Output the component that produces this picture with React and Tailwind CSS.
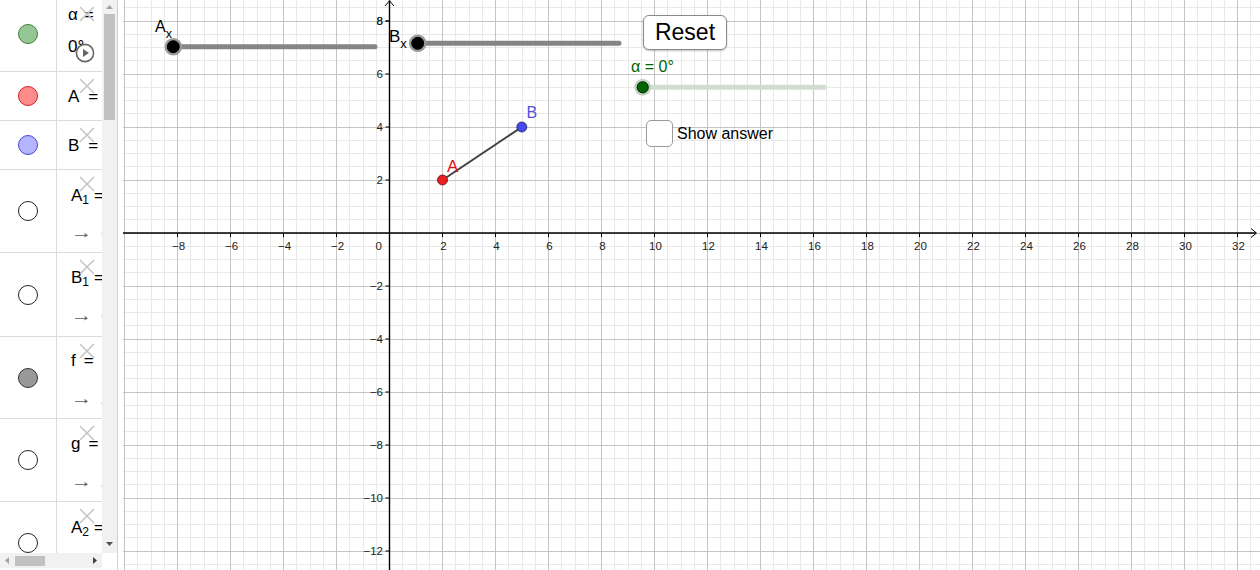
import React from 'react';

// graphics view geometry (page pixels)
const X0 = 389.5;
const Y0 = 233;
const U = 26.5;
const M = U / 2;

const range = (a, b) => {
  const out = [];
  for (let i = a; i <= b; i++) out.push(i);
  return out;
};

const Marble = ({ className }) => (
  <span className={`block w-[20px] h-[20px] rounded-full border ${className}`} />
);

const CloseX = () => (
  <svg className="absolute left-[22px] top-[6px]" width="16" height="16" viewBox="0 0 16 16">
    <path d="M1 1 L15 15 M15 1 L1 15" stroke="#c6c6c6" strokeWidth="1.6" fill="none" />
  </svg>
);

const Row = ({ height, marble, marbleBox = '', text, children, extra }) => (
  <div className={`flex flex-none border-b border-[#dcdcdc] ${height}`}>
    <div className={`w-[57px] flex-none border-r border-[#dcdcdc] flex items-center justify-center ${marbleBox}`}>
      <Marble className={marble} />
    </div>
    <div className={`relative flex-1 flex flex-col whitespace-nowrap leading-[20px] ${text}`}>
      {children}
      <CloseX />
      {extra}
    </div>
  </div>
);

const Arrow = ({ value }) => (
  <span>
    <span className="inline-block text-[#5a5a5a] scale-x-125 origin-left">→</span>
    <span className="ml-[13px]">{value}</span>
  </span>
);

const Name = ({ children, sub, gap = 'ml-[9px]' }) => (
  <span className="flex items-baseline">
    <span>
      {children}
      {sub && <sub className="text-[12px]">{sub}</sub>}
    </span>
    <span className={gap}>=</span>
  </span>
);

const AlgebraView = () => (
  <div className="w-[123px] h-full flex flex-none">
    <div className="w-[117px] flex flex-col">
      <div className="flex flex-1 min-h-0">
        <div className="w-[102px] overflow-hidden flex flex-col text-[17px] text-black">
          <Row height="h-[72px]" marble="bg-[#94c794] border-[#3f7f3f]" marbleBox="pb-[4px]" text="pl-[11px] pt-[5px] gap-[12px]"
            extra={
              <svg className="absolute left-[18px] top-[43px]" width="20" height="20" viewBox="0 0 20 20">
                <circle cx="10" cy="10" r="8.6" stroke="#666" strokeWidth="1.6" fill="white" fillOpacity="0.6" />
                <path d="M8 6 L14 10 L8 14 Z" fill="#666" />
              </svg>
            }>
            <Name gap="ml-[6px]">α</Name>
            <span>0°</span>
          </Row>
          <Row height="h-[49px]" marble="bg-[#ff8c8c] border-[#cc2222]" text="pl-[11px] pt-[15px]">
            <Name>A</Name>
          </Row>
          <Row height="h-[49px]" marble="bg-[#b5b5ff] border-[#4646d8]" text="pl-[11px] pt-[15px]">
            <Name>B</Name>
          </Row>
          <Row height="h-[83px]" marble="bg-white border-[#222]" text="pl-[14px] pt-[16px] gap-[17px]">
            <Name sub="1" gap="ml-[5px]">A</Name>
            <Arrow value="(2, 2)" />
          </Row>
          <Row height="h-[84px]" marble="bg-white border-[#222]" text="pl-[14px] pt-[15px] gap-[18px]">
            <Name sub="1" gap="ml-[5px]">B</Name>
            <Arrow value="(5, 4)" />
          </Row>
          <Row height="h-[82px]" marble="bg-[#999] border-[#333]" text="pl-[14px] pt-[14px] gap-[18px]">
            <Name gap="ml-[8px]">f</Name>
            <Arrow value="2" />
          </Row>
          <Row height="h-[83px]" marble="bg-white border-[#222]" text="pl-[14px] pt-[15px] gap-[18px]">
            <Name gap="ml-[8px]">g</Name>
            <Arrow value="2" />
          </Row>
          <Row height="h-[83px]" marble="bg-white border-[#222]" text="pl-[14px] pt-[16px]">
            <Name sub="2" gap="ml-[5px]">A</Name>
          </Row>
        </div>
        {/* vertical scrollbar */}
        <div className="w-[15px] flex-none bg-[#f1f1f1] flex flex-col items-center pt-[5px] pb-[7px]">
          <svg width="7" height="4" viewBox="0 0 7 4"><path d="M0 4 L3.5 0 L7 4 Z" fill="#a3a3a3" /></svg>
          <div className="mt-[5px] w-[11px] h-[106px] bg-[#c1c1c1]" />
          <div className="flex-1" />
          <svg width="7" height="4" viewBox="0 0 7 4"><path d="M0 0 L3.5 4 L7 0 Z" fill="#505050" /></svg>
        </div>
      </div>
      {/* horizontal scrollbar */}
      <div className="h-[15px] flex flex-none">
        <div className="w-[102px] bg-[#f1f1f1] flex items-center pl-[5px] pr-[5px]">
          <svg width="4" height="7" viewBox="0 0 4 7"><path d="M4 0 L0 3.5 L4 7 Z" fill="#a3a3a3" /></svg>
          <div className="ml-[6px] w-[30px] h-[10px] bg-[#c1c1c1]" />
          <div className="flex-1" />
          <svg width="4" height="7" viewBox="0 0 4 7"><path d="M0 0 L4 3.5 L0 7 Z" fill="#404040" /></svg>
        </div>
        <div className="w-[15px] bg-white" />
      </div>
      <div className="h-[2px]" />
    </div>
    <div className="w-px bg-[#d0d0d0]" />
    <div className="w-[5px]" />
  </div>
);

const Slider = ({ x1, x2, y, track, halo, dot, dotStroke, r = 6 }) => (
  <g>
    <line x1={x1} y1={y} x2={x2} y2={y} stroke={track} strokeWidth="5" strokeLinecap="round" />
    <circle cx={x1} cy={y} r={r + 2.8} fill={halo} />
    <circle cx={x1} cy={y} r={r} fill={dot} stroke={dotStroke} strokeWidth="1" />
  </g>
);

const GraphicsView = () => {
  const vks = range(-20, 65);
  const hks = range(-17, 25);
  const xLabels = range(-4, 16).filter((k) => k !== 0).map((k) => k * 2);
  const yLabels = range(-6, 4).filter((k) => k !== 0).map((k) => k * 2);
  const minus = (n) => (n < 0 ? `\u2212${-n}` : `${n}`);

  return (
    <div className="relative flex-1 h-full overflow-hidden bg-white">
      <svg width="1137" height="570" viewBox="123 0 1137 570" className="block">
        {/* minor grid */}
        <g stroke="#e8e8e8" strokeWidth="1" shapeRendering="crispEdges">
          {vks.filter((k) => k % 4 !== 0).map((k) => (
            <line key={`vm${k}`} x1={X0 + k * M} y1="0" x2={X0 + k * M} y2="570" />
          ))}
          {hks.filter((k) => k % 4 !== 0).map((k) => (
            <line key={`hm${k}`} x1="123" y1={Y0 + k * M} x2="1260" y2={Y0 + k * M} />
          ))}
        </g>
        {/* major grid */}
        <g stroke="#c4c4c4" strokeWidth="1" shapeRendering="crispEdges">
          {vks.filter((k) => k % 4 === 0).map((k) => (
            <line key={`vM${k}`} x1={X0 + k * M} y1="0" x2={X0 + k * M} y2="570" />
          ))}
          {hks.filter((k) => k % 4 === 0).map((k) => (
            <line key={`hM${k}`} x1="123" y1={Y0 + k * M} x2="1260" y2={Y0 + k * M} />
          ))}
        </g>

        {/* axes */}
        <g stroke="#000" strokeWidth="1.4" fill="none">
          <line x1="123" y1={Y0} x2="1256" y2={Y0} />
          <line x1={X0} y1="0.5" x2={X0} y2="570" />
          <polyline points={`1251,${Y0 - 4.5} 1256.5,${Y0} 1251,${Y0 + 4.5}`} strokeWidth="1" />
          <polyline points={`${X0 - 4.5},6 ${X0},0.8 ${X0 + 4.5},6`} strokeWidth="1" />
          {xLabels.map((n) => (
            <line key={`tx${n}`} x1={X0 + n * U} y1={Y0} x2={X0 + n * U} y2={Y0 + 4} strokeWidth="1" />
          ))}
          {yLabels.concat([8]).map((n) => (
            <line key={`ty${n}`} x1={X0 - 4} y1={Y0 - n * U} x2={X0} y2={Y0 - n * U} strokeWidth="1" />
          ))}
        </g>

        {/* axis numbers */}
        <g fontSize="11.5" fill="#222">
          {xLabels.map((n) => (
            <text key={`lx${n}`} x={X0 + n * U + 1} y={Y0 + 16.5} textAnchor="middle">{minus(n)}</text>
          ))}
          <text x={X0 - 7.5} y={Y0 + 16.5} textAnchor="end">0</text>
          {yLabels.concat([8]).map((n) => (
            <text key={`ly${n}`} x={X0 - 6.5} y={Y0 - n * U + 4.3} textAnchor="end">{minus(n)}</text>
          ))}
        </g>

        {/* sliders */}
        <Slider x1={173.3} x2={375} y={46.7} track="#858585" halo="#9a9a9a" dot="#000" dotStroke="#000" />
        <Slider x1={417.7} x2={619} y={43.3} track="#858585" halo="#9a9a9a" dot="#000" dotStroke="#000" />
        <Slider x1={642.7} x2={824} y={87.3} track="#d2ddd2" halo="#c3d0c3" dot="#006400" dotStroke="#002200" r={5.6} />

        <text x="155" y="32.3" fontSize="16" fill="#000">
          A<tspan fontSize="12.5" dy="5.5">x</tspan>
        </text>
        <text x="389" y="41.7" fontSize="17" fill="#000">
          B<tspan fontSize="13" dy="5.8">x</tspan>
        </text>
        <text x="631" y="71.7" fontSize="16" fill="#006400">α = 0°</text>

        {/* segment and points */}
        <line x1="442.5" y1="180" x2="521.8" y2="127" stroke="#404040" strokeWidth="2" />
        <circle cx="442.5" cy="180" r="5" fill="#e82020" stroke="#5a0f0f" strokeWidth="0.8" />
        <circle cx="521.8" cy="127" r="5" fill="#4848f0" stroke="#1e1e5a" strokeWidth="0.8" />
        <text x="447" y="171.7" fontSize="17" fill="#e01010">A</text>
        <text x="526.5" y="117.7" fontSize="16" fill="#5252dd">B</text>
      </svg>

      {/* widgets lying on the canvas */}
      <button className="absolute left-[520px] top-[15px] w-[84px] h-[35px] rounded-[6px] border-[1.5px] border-[#8a8a8a] bg-white shadow-[0_1px_2px_rgba(0,0,0,0.25)] flex items-center justify-center text-[23px] leading-none text-black">
        Reset
      </button>
      <div className="absolute left-[523px] top-[120px] flex items-center gap-[4px]">
        <div className="w-[27px] h-[27px] rounded-[5px] border-[1.5px] border-[#9a9a9a] bg-white" />
        <span className="text-[16px] leading-[20px] text-black">Show answer</span>
      </div>
    </div>
  );
}

export default function App() {
  return (
    <div className="w-[1260px] h-[570px] flex overflow-hidden bg-white font-['Liberation_Sans',Arial,sans-serif]">
      <AlgebraView />
      <GraphicsView />
    </div>
  );
}
